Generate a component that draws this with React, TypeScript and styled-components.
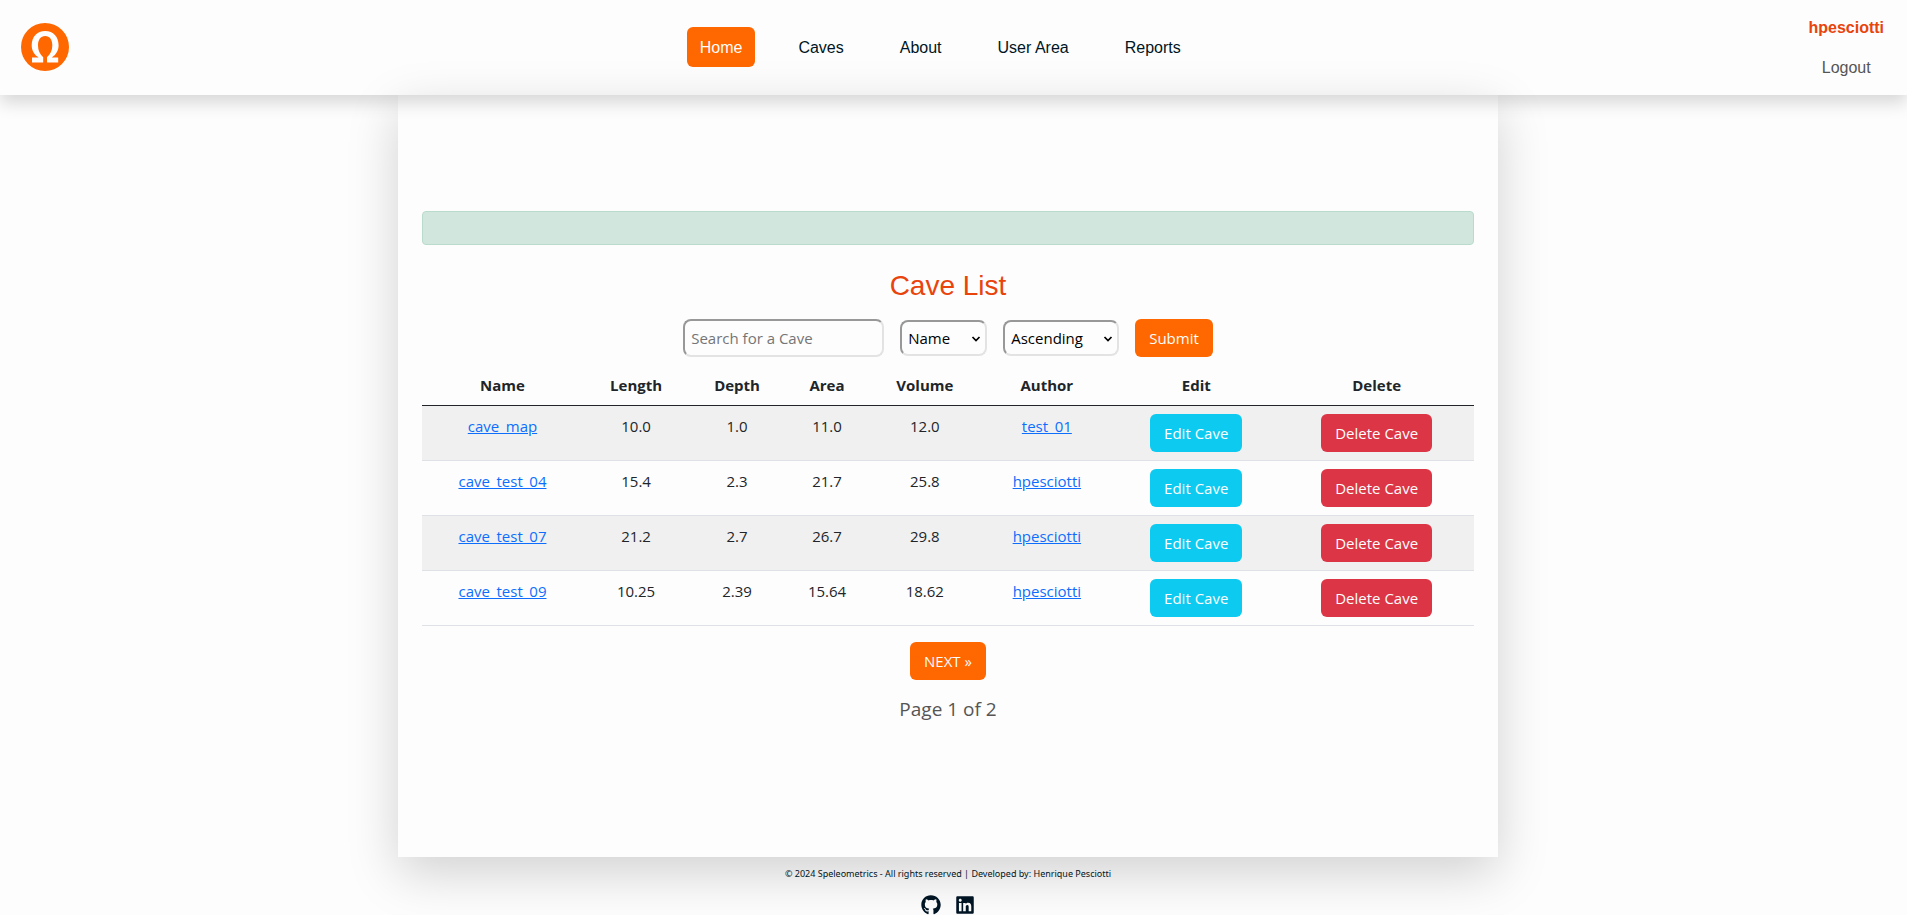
import React from "react";
import styled, { createGlobalStyle } from "styled-components";
import { FaGithub, FaLinkedin } from "react-icons/fa";

const GlobalStyle = createGlobalStyle`
  *, *::before, *::after { box-sizing: border-box; }
  body {
    margin: 0;
    background: #fdfdfd;
    color: #212529;
    font: 15px/24px "Open Sans", "Noto Sans", sans-serif;
  }
`;

const arial = `"Liberation Sans", Arial, sans-serif`;
const gutter = "11px";

const Page = styled.div`
  min-height: 100vh;
  display: flex;
  flex-direction: column;
`;

const Header = styled.header`
  display: flex;
  align-items: center;
  justify-content: space-between;
  padding: 7px ${gutter} 8px 0;
  font-family: ${arial};
  font-size: 16px;
  box-shadow: 0 8px 16px rgba(0, 0, 0, 0.15);
`;

const Body = styled.div`
  flex: 1;
  display: flex;
  flex-direction: column;
  padding-right: ${gutter};
`;

const LogoLink = styled.a`
  display: flex;
  padding: 0 15px 0 21px;
`;

const Nav = styled.nav`
  display: flex;
  gap: 30px;
`;

const NavLink = styled.a<{ $active?: boolean }>`
  padding: 9px 13px 7px;
  border-radius: 6px;
  text-decoration: none;
  color: ${(p) => (p.$active ? "#fdfdfd" : "#001524")};
  background: ${(p) => (p.$active ? "#ff6700" : "transparent")};
`;

const UserBox = styled.div`
  display: flex;
  flex-direction: column;
  align-items: center;
`;

const UserLink = styled.a<{ $strong?: boolean }>`
  padding: 9px 12px 7px;
  text-decoration: none;
  font-weight: ${(p) => (p.$strong ? 700 : 400)};
  color: ${(p) => (p.$strong ? "#e8440c" : "#555")};
`;

const Main = styled.main`
  flex: 1;
  display: flex;
  flex-direction: column;
  justify-content: center;
  align-items: center;
  width: 100%;
  max-width: 1100px;
  margin: 0 auto;
  padding: 24px;
  box-shadow: 0 16px 48px rgba(0, 0, 0, 0.175);
`;

const Alert = styled.div`
  width: 100%;
  height: 34px;
  margin-bottom: 24px;
  background: #d1e7dd;
  border: 1px solid #badbcc;
  border-radius: 4px;
`;

const Title = styled.h1`
  margin: 0 0 16px;
  font: 400 28px/34px ${arial};
  color: #e8440c;
`;

const SearchForm = styled.form`
  display: flex;
  align-items: center;
  gap: 16px;
  margin-bottom: 8px;
`;

const fieldBorder = `
  border: 2px solid;
  border-color: #989898 #e3e3e3 #e3e3e3 #989898;
  border-radius: 8px;
  background: transparent;
  font-family: inherit;
  font-size: 15px;
`;

const SearchInput = styled.input`
  ${fieldBorder}
  width: 201px;
  height: 38px;
  padding: 0 6px;
  &::placeholder { color: #757575; }
`;

const SelectWrap = styled.div<{ $width: number }>`
  position: relative;
  display: flex;
  width: ${(p) => p.$width}px;
  svg {
    position: absolute;
    right: 6px;
    top: 15px;
    pointer-events: none;
  }
`;

const Select = styled.select`
  ${fieldBorder}
  appearance: none;
  width: 100%;
  height: 36px;
  padding: 0 6px;
  color: #000;
`;

const tones = { orange: "#ff6700", cyan: "#0dcaf0", red: "#dc3545" };

const Button = styled.button<{ $tone: keyof typeof tones }>`
  height: 38px;
  padding: 0 14px;
  border: 0;
  border-radius: 6px;
  font: inherit;
  color: #fdfdfd;
  background: ${(p) => tones[p.$tone]};
`;

const Table = styled.table`
  width: 100%;
  table-layout: fixed;
  border-collapse: collapse;
  text-align: center;
  margin-bottom: 16px;
`;

const HeadCell = styled.th<{ $share: number }>`
  width: ${(p) => p.$share}%;
  padding: 8px;
  font-weight: 700;
  border-bottom: 1px solid #212529;
`;

const Row = styled.tr`
  &:nth-child(odd) { background: #f0f0f0; }
`;

const Cell = styled.td`
  padding: 8px;
  vertical-align: top;
  border-bottom: 1px solid #dee2e6;
`;

const TextLink = styled.a`
  color: #0d6efd;
`;

const PageCount = styled.p`
  margin: 13px 0 16px;
  font-size: 19px;
  line-height: 32px;
  color: #555;
`;

const Footer = styled.footer`
  display: flex;
  flex-direction: column;
  align-items: center;
  gap: 14px;
  padding: 10px 0 0;
  color: #001524;
  font-family: "Noto Sans", "Open Sans", sans-serif;
  font-size: 9px;
  line-height: 14px;
`;

const FooterText = styled.p`
  margin: 0;
`;

const Socials = styled.div`
  display: flex;
  gap: 14px;
`;

const SocialLink = styled.a`
  display: flex;
  color: inherit;
  svg { width: auto; height: 20px; }
`;

const columns = [
  { label: "Name", share: 15.3 },
  { label: "Length", share: 10.1 },
  { label: "Depth", share: 9.1 },
  { label: "Area", share: 8 },
  { label: "Volume", share: 10.6 },
  { label: "Author", share: 12.6 },
  { label: "Edit", share: 15.8 },
  { label: "Delete", share: 18.5 },
];

const caves = [
  { name: "cave_map", values: ["10.0", "1.0", "11.0", "12.0"], author: "test_01" },
  { name: "cave_test_04", values: ["15.4", "2.3", "21.7", "25.8"], author: "hpesciotti" },
  { name: "cave_test_07", values: ["21.2", "2.7", "26.7", "29.8"], author: "hpesciotti" },
  { name: "cave_test_09", values: ["10.25", "2.39", "15.64", "18.62"], author: "hpesciotti" },
];

const Logo = () => (
  <svg width="48" height="48" viewBox="0 0 48 48" aria-hidden="true">
    <circle cx="24" cy="24" r="24" fill="#ff6700" />
    <path
      fill="#fdfdfd"
      d="M11 39.5V34.5H17.6C13.2 31.8 10.7 27.5 10.7 22.3C10.7 13.7 16 8 24.2 8S37.6 13.7 37.6 22.3C37.6 27.5 35 31.8 30.8 34.5H37.2V39.5H26V34.2C29.5 31 31.3 27.3 31.3 22.4C31.3 16.6 28.8 13 24.2 13S17 16.6 17 22.4C17 27.3 18.8 31 22.2 34.2V39.5Z"
    />
  </svg>
);

const Chevron = () => (
  <svg width="10" height="8" viewBox="0 0 10 8" fill="none" aria-hidden="true">
    <path d="M1.5 2L5 5.6L8.5 2" stroke="#000" strokeWidth="1.7" />
  </svg>
);

function SelectField({ label, width, options }: { label: string; width: number; options: string[] }) {
  return (
    <SelectWrap $width={width}>
      <Select aria-label={label} defaultValue={options[0]}>
        {options.map((o) => (
          <option key={o}>{o}</option>
        ))}
      </Select>
      <Chevron />
    </SelectWrap>
  );
}

export default function App() {
  return (
    <Page>
      <GlobalStyle />
      <Header>
        <LogoLink href="#" aria-label="Speleometrics">
          <Logo />
        </LogoLink>
        <Nav>
          {["Home", "Caves", "About", "User Area", "Reports"].map((item, i) => (
            <NavLink key={item} href="#" $active={i === 0}>
              {item}
            </NavLink>
          ))}
        </Nav>
        <UserBox>
          <UserLink href="#" $strong>
            hpesciotti
          </UserLink>
          <UserLink href="#">Logout</UserLink>
        </UserBox>
      </Header>
      <Body>
        <Main>
          <Alert role="status" />
          <Title>Cave List</Title>
          <SearchForm onSubmit={(e) => e.preventDefault()}>
            <SearchInput type="text" placeholder="Search for a Cave" aria-label="Search for a Cave" />
            <SelectField
              label="Sort by"
              width={87}
              options={["Name", "Length", "Depth", "Area", "Volume"]}
            />
            <SelectField label="Order" width={116} options={["Ascending", "Descending"]} />
            <Button type="submit" $tone="orange">
              Submit
            </Button>
          </SearchForm>
          <Table>
            <thead>
              <tr>
                {columns.map((c) => (
                  <HeadCell key={c.label} scope="col" $share={c.share}>
                    {c.label}
                  </HeadCell>
                ))}
              </tr>
            </thead>
            <tbody>
              {caves.map((cave) => (
                <Row key={cave.name}>
                  <Cell>
                    <TextLink href="#">{cave.name}</TextLink>
                  </Cell>
                  {cave.values.map((v, i) => (
                    <Cell key={i}>{v}</Cell>
                  ))}
                  <Cell>
                    <TextLink href="#">{cave.author}</TextLink>
                  </Cell>
                  <Cell>
                    <Button type="button" $tone="cyan">
                      Edit Cave
                    </Button>
                  </Cell>
                  <Cell>
                    <Button type="button" $tone="red">
                      Delete Cave
                    </Button>
                  </Cell>
                </Row>
              ))}
            </tbody>
          </Table>
          <Button type="button" $tone="orange">
            NEXT »
          </Button>
          <PageCount>Page 1 of 2</PageCount>
        </Main>
        <Footer>
          <FooterText>
            © 2024 Speleometrics - All rights reserved | Developed by: Henrique Pesciotti
          </FooterText>
          <Socials>
            <SocialLink href="#" aria-label="GitHub">
              <FaGithub />
            </SocialLink>
            <SocialLink href="#" aria-label="LinkedIn">
              <FaLinkedin />
            </SocialLink>
          </Socials>
        </Footer>
      </Body>
    </Page>
  );
}
